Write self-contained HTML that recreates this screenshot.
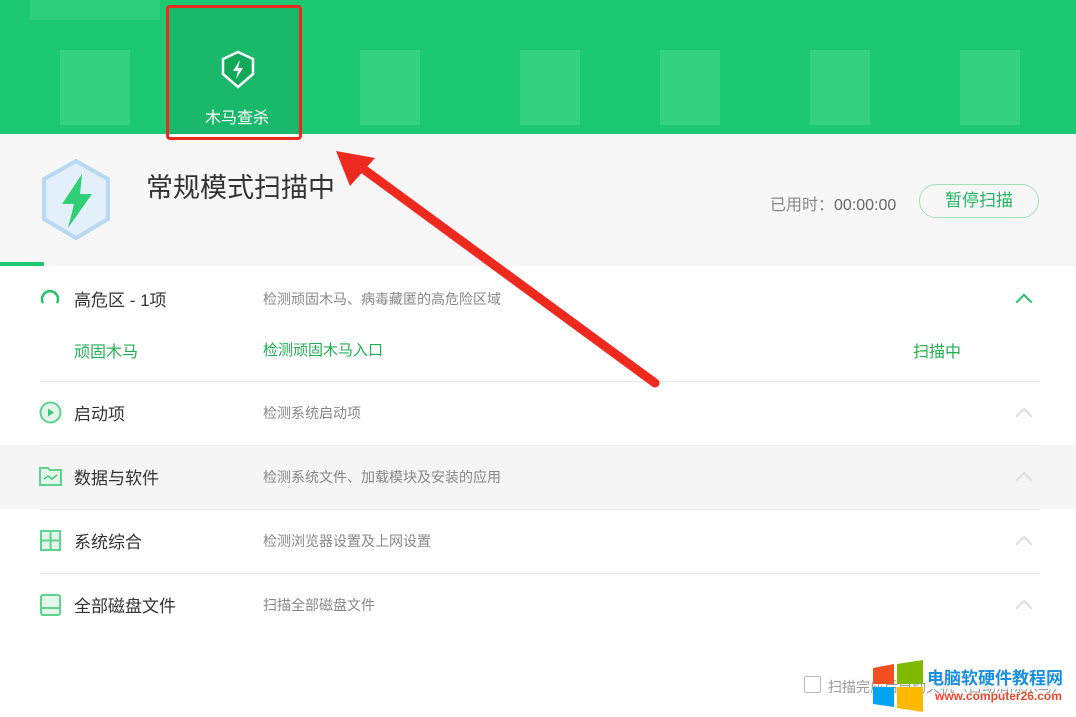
<!DOCTYPE html><html><head><meta charset="utf-8"><style>
body{margin:0;width:1076px;height:717px;overflow:hidden;background:#fff;font-family:"Liberation Sans","Noto Sans CJK SC",sans-serif;position:relative}
.a{position:absolute}
.hdr{left:0;top:0;width:1076px;height:134px;background:#1dc873}
.blob{position:absolute;background:#52dc92;opacity:.45}
.t{position:absolute;left:74px;font-size:17px;color:#333}
.d{position:absolute;left:263px;font-size:14px;color:#888}
.ln{position:absolute;left:40px;width:1000px;height:1px;background:#e8e8e8}
.chev{position:absolute;left:1018px;width:10px;height:10px;border-left:2px solid #ddd;border-top:2px solid #ddd;transform:rotate(45deg)}
</style></head><body>
<div class="a hdr"></div>
<div class="blob" style="left:60px;top:50px;width:70px;height:75px"></div>
<div class="blob" style="left:30px;top:0;width:130px;height:20px;opacity:.3"></div>
<div class="blob" style="left:360px;top:50px;width:60px;height:75px"></div>
<div class="blob" style="left:520px;top:50px;width:60px;height:75px"></div>
<div class="blob" style="left:660px;top:50px;width:60px;height:75px"></div>
<div class="blob" style="left:810px;top:50px;width:60px;height:75px"></div>
<div class="blob" style="left:960px;top:50px;width:60px;height:75px"></div>
<div class="a" style="left:166px;top:5px;width:134px;height:129px;background:#1ab86a"></div>
<div class="a" style="left:166px;top:5px;width:136px;height:135px;border:3px solid #ee2a1f;border-radius:4px;box-sizing:border-box"></div>
<svg class="a" style="left:220px;top:50px" width="36" height="40" viewBox="0 0 36 40"><path d="M18 2 L33 9 V24 L18 37 L3 24 V9Z" fill="#11a85a" stroke="#fff" stroke-width="2.5"/><path d="M20 10 L13 21 H18 L16 29 L23 18 H18Z" fill="#fff"/></svg>
<div class="a" style="left:205px;top:104px;font-size:16px;color:#fff">木马查杀</div>
<div class="a" style="left:0;top:140px;width:1076px;height:126px;background:#f7f7f7"></div>
<div class="a" style="left:0;top:134px;width:166px;height:6px;background:#f7f7f7"></div>
<div class="a" style="left:302px;top:134px;width:774px;height:6px;background:#f7f7f7"></div>
<svg class="a" style="left:40px;top:158px" width="72" height="84" viewBox="0 0 72 84"><path d="M36 3 L68 21 V61 L36 80 L4 61 V21Z" fill="#e3f0fb" stroke="#b8d8f3" stroke-width="4"/><path d="M42 16 L22 46 H34 L28 70 L52 36 H40Z" fill="#2fcf76"/></svg>
<div class="a" style="left:146px;top:166px;font-size:27px;color:#333">常规模式扫描中</div>
<div class="a" style="left:770px;top:191px;font-size:16px;color:#888">已用时：<span style="color:#666">00:00:00</span></div>
<div class="a" style="left:919px;top:184px;width:118px;height:32px;border:1.5px solid #9fe0bb;border-radius:17px;color:#1fb762;font-size:17px;text-align:center;line-height:32px">暂停扫描</div>
<div class="a" style="left:0;top:262px;width:44px;height:4px;background:#1dc873"></div>
<svg class="a" style="left:39px;top:288px" width="22" height="22"><path d="M4 15 A8 8 0 1 1 18 15" fill="none" stroke="#26c168" stroke-width="2.5"/></svg>
<div class="t" style="top:286px">高危区 - 1项</div><div class="d" style="top:289px">检测顽固木马、病毒藏匿的高危险区域</div>
<div class="chev" style="top:296px;border-color:#26c168"></div>
<div class="a" style="left:74px;top:338px;font-size:16px;color:#1fb04f">顽固木马</div>
<div class="a" style="left:263px;top:339px;font-size:15px;color:#1fb04f">检测顽固木马入口</div>
<div class="a" style="left:913px;top:338px;font-size:16px;color:#1fb04f">扫描中</div>
<div class="ln" style="top:381px"></div>
<svg class="a" style="left:39px;top:401px" width="23" height="23"><circle cx="11.5" cy="11.5" r="10" fill="#e4f7ec" stroke="#5fd38e" stroke-width="2"/><path d="M9 7.5 L15 11.5 L9 15.5Z" fill="#3cc676"/></svg>
<div class="t" style="top:400px">启动项</div><div class="d" style="top:403px">检测系统启动项</div><div class="chev" style="top:410px"></div>
<div class="a" style="left:0;top:445px;width:1076px;height:64px;background:#f5f5f5"></div>
<div class="ln" style="top:445px"></div>
<svg class="a" style="left:39px;top:466px" width="23" height="20"><path d="M1 2 H9 L11 4 H22 V19 H1Z" fill="#e4f7ec" stroke="#5fd38e" stroke-width="2"/><path d="M5 13 L9 10 L13 13 L18 9" fill="none" stroke="#3cc676" stroke-width="1.5"/></svg>
<div class="t" style="top:464px">数据与软件</div><div class="d" style="top:467px">检测系统文件、加载模块及安装的应用</div><div class="chev" style="top:474px"></div>
<div class="ln" style="top:509px"></div>
<svg class="a" style="left:40px;top:530px" width="21" height="21"><rect x="1" y="1" width="19" height="19" fill="#e4f7ec" stroke="#5fd38e" stroke-width="2"/><path d="M10.5 1 V20 M1 10.5 H20" stroke="#5fd38e" stroke-width="2"/></svg>
<div class="t" style="top:528px">系统综合</div><div class="d" style="top:531px">检测浏览器设置及上网设置</div><div class="chev" style="top:538px"></div>
<div class="ln" style="top:573px"></div>
<svg class="a" style="left:40px;top:594px" width="21" height="22"><rect x="1" y="1" width="19" height="20" rx="2" fill="#e4f7ec" stroke="#5fd38e" stroke-width="2"/><path d="M1 14 H20" stroke="#5fd38e" stroke-width="2"/></svg>
<div class="t" style="top:592px">全部磁盘文件</div><div class="d" style="top:595px">扫描全部磁盘文件</div><div class="chev" style="top:602px"></div>
<div class="a" style="left:804px;top:676px;width:17px;height:17px;border:1.5px solid #bbb;border-radius:2px;box-sizing:border-box"></div>
<div class="a" style="left:828px;top:677px;font-size:14px;color:#999">扫描完成后自动关机（自动清除木马）</div>
<svg class="a" style="left:870px;top:660px" width="56" height="52"><path d="M3 8 L24 4 V24 H3Z" fill="#f25022"/><path d="M27 4 L53 0 V24 H27Z" fill="#7fba00"/><path d="M3 27 H24 V47 L3 44Z" fill="#00a4ef"/><path d="M27 27 H53 V52 L27 48Z" fill="#ffb900"/></svg>
<div class="a" style="left:927px;top:664px;font-size:17px;font-weight:bold;color:#1a8fe0;background:rgba(255,255,255,.8)">电脑软硬件教程网</div>
<div class="a" style="left:935px;top:689px;font-size:12px;font-weight:bold;color:#e8472b">www.computer26.com</div>
<svg class="a" style="left:0;top:0" width="1076" height="717"><path d="M655 383 L362 168" stroke="#ee2a1f" stroke-width="9" stroke-linecap="round"/><path d="M336 151 L375 158 L350 186Z" fill="#ee2a1f"/></svg>
</body></html>
